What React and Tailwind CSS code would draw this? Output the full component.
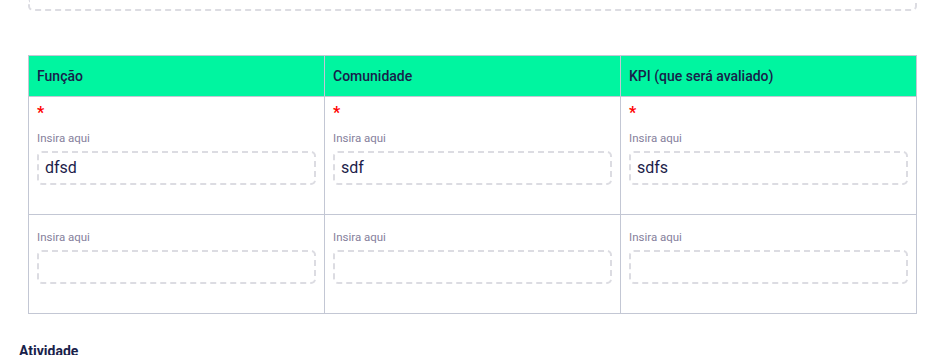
import React from "react";

const cols = ["Função", "Comunidade", "KPI (que será avaliado)"];
const row1 = ["dfsd", "sdf", "sdfs"];

function Field({ required, value }) {
  return (
    <div className="px-2 pt-2 pb-[29px]">
      {required && (
        <div className="h-[19px] text-[16px] leading-[16px] text-[#ff0000] font-bold">*</div>
      )}
      <div className="mt-[6px] h-[16px] text-[11.5px] leading-[16px] text-[#85809c]">Insira aqui</div>
      <div className="mt-[5px] h-[34px] border-2 border-dashed border-[#dcdce2] rounded-[5px] px-[6px] flex items-center text-[16px] text-[#1c1d4a]">
        {value}
      </div>
    </div>
  );
}

export default function App() {
  return (
    <div className="w-[933px] h-[355px] overflow-hidden bg-white" style={{ fontFamily: "Roboto, 'Noto Sans', sans-serif" }}>
      <div className="pl-[28px]">
        <div className="w-[889px] h-[11px] border-2 border-t-0 border-dashed border-[#dcdce2] rounded-b-[5px]" />
        <div className="mt-[44px] w-[889px] border border-[#c3c7d4]">
          <div className="grid grid-cols-[296px_296px_295px] divide-x divide-[#c3c7d4] bg-[#00f5a0] border-b border-[#c3c7d4]">
            {cols.map((c) => (
              <div key={c} className="h-[40px] flex items-center px-2 text-[14px] font-medium text-[#18214a]">
                {c}
              </div>
            ))}
          </div>
          <div className="grid grid-cols-[296px_296px_295px] divide-x divide-[#c3c7d4] border-b border-[#c3c7d4]">
            {row1.map((v, i) => (
              <Field key={i} required value={v} />
            ))}
          </div>
          <div className="grid grid-cols-[296px_296px_295px] divide-x divide-[#c3c7d4]">
            {[0, 1, 2].map((i) => (
              <Field key={i} value="" />
            ))}
          </div>
        </div>
      </div>
      <div className="pl-[19px] mt-[27px] text-[14px] leading-[20px] font-bold text-[#18214a]">Atividade</div>
    </div>
  );
}
